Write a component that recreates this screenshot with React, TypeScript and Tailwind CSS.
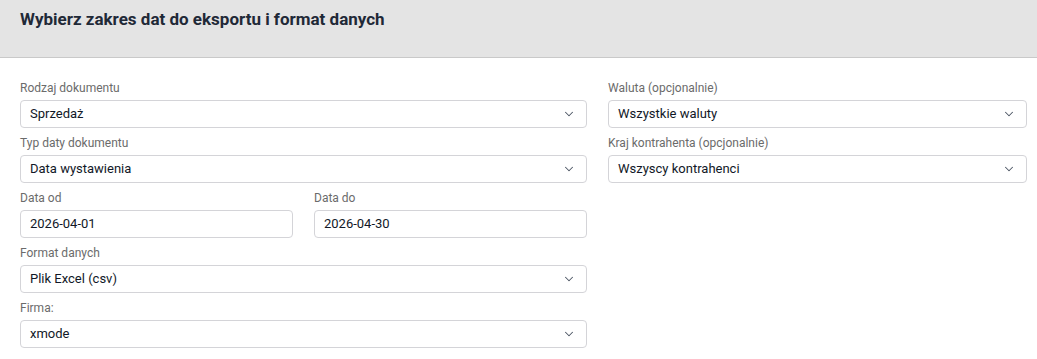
import { ChevronDown } from 'lucide-react';

interface FieldProps {
  label: string;
  value: string;
  select?: boolean;
}

function Field({ label, value, select = true }: FieldProps) {
  return (
    <div className="mb-[7px]">
      <div className="text-[12px] leading-4 text-[#6b6b6b] mb-1">{label}</div>
      <div className="h-[28px] border border-[#d4d4d8] rounded-[4px] bg-white flex items-center justify-between pl-[9px] pr-[10px]">
        <span className="text-[13px] text-[#111827]">{value}</span>
        {select && <ChevronDown size={14} strokeWidth={1.75} className="text-[#4b5563]" />}
      </div>
    </div>
  );
}

export default function App() {
  return (
    <div className="bg-white min-h-screen" style={{ fontFamily: 'Roboto, "Liberation Sans", sans-serif' }}>
      {/* Header */}
      <div className="h-[58px] bg-[#e4e4e4] border-b border-[#c9c9c9] px-5 pt-[9px]">
        <h1 className="text-[17px] leading-5 font-bold text-[#1f2937]">
          Wybierz zakres dat do eksportu i format danych
        </h1>
      </div>

      {/* Form */}
      <div className="pl-5 pt-[22px] grid grid-cols-[567px_419px] gap-x-[21px]">
        <div>
          <Field label="Rodzaj dokumentu" value="Sprzedaż" />
          <Field label="Typ daty dokumentu" value="Data wystawienia" />
          <div className="grid grid-cols-2 gap-x-[21px]">
            <Field label="Data od" value="2026-04-01" select={false} />
            <Field label="Data do" value="2026-04-30" select={false} />
          </div>
          <Field label="Format danych" value="Plik Excel (csv)" />
          <Field label="Firma:" value="xmode" />
        </div>
        <div>
          <Field label="Waluta (opcjonalnie)" value="Wszystkie waluty" />
          <Field label="Kraj kontrahenta (opcjonalnie)" value="Wszyscy kontrahenci" />
        </div>
      </div>
    </div>
  );
}
